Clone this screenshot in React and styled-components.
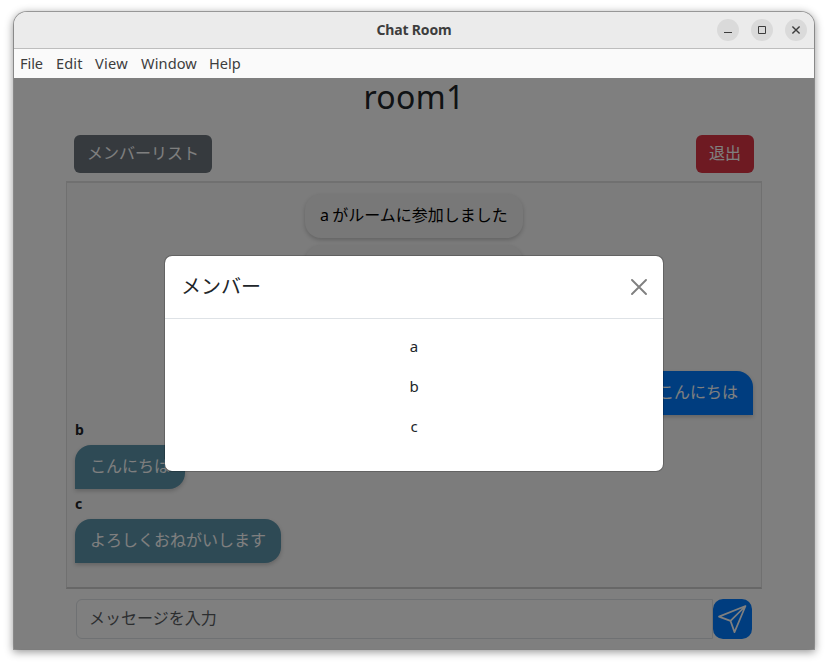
import React from "react";
import styled, { createGlobalStyle } from "styled-components";

const GlobalStyle = createGlobalStyle`
  * { box-sizing: border-box; }
  body { margin: 0; background: #fff; }
  button, input { font: inherit; }
`;

const latin = `"Noto Sans", "Noto Sans CJK JP", sans-serif`;

const Desktop = styled.div`
  width: 828px;
  height: 666px;
  padding: 12px 14px 16px;
  overflow: hidden;
  font-family: ${latin};
  font-size: 16px;
  line-height: 24px;
  color: #212529;
`;

const Window = styled.div`
  display: flex;
  flex-direction: column;
  height: 637px;
  border-radius: 13px 13px 0 0;
  box-shadow: 0 0 0 1px rgba(0, 0, 0, 0.3), 0 2px 8px 1px rgba(0, 0, 0, 0.42);
`;

const TitleBar = styled.header`
  display: grid;
  grid-template-columns: 1fr auto 1fr;
  align-items: center;
  height: 37px;
  padding-right: 7px;
  border-bottom: 1px solid #bdbdbd;
  border-radius: 13px 13px 0 0;
  background: #ebebeb;
`;

const Title = styled.h1`
  grid-column: 2;
  margin: 0 -7px 0 0;
  font-size: 14px;
  font-weight: 700;
  line-height: 20px;
  letter-spacing: -0.18px;
  color: #3d3d3d;
`;

const WindowControls = styled.div`
  display: flex;
  justify-content: flex-end;
  gap: 12px;
`;

const ControlButton = styled.button`
  display: flex;
  width: 22px;
  height: 22px;
  padding: 0;
  border: 0;
  border-radius: 50%;
  background: #dadada;
`;

const MenuBar = styled.nav`
  display: flex;
  gap: 12px;
  height: 29px;
  padding-left: 6px;
  background: #fafafa;
`;

const MenuItem = styled.span`
  width: ${(p) => p.$width}px;
  font-size: 14.6px;
  line-height: 29px;
  letter-spacing: ${(p) => p.$spacing || 0}px;
  white-space: nowrap;
  color: #3d3d3d;
`;

const Page = styled.main`
  position: relative;
  height: 571px;
  background: #fff;
`;

const Container = styled.div`
  width: 696px;
  margin: 0 auto;
`;

const RoomName = styled.h2`
  height: 38px;
  margin: 0 0 19px;
  text-align: center;
  font-size: 32px;
  font-weight: 400;
  line-height: 38px;
  letter-spacing: 0.3px;
`;

const Toolbar = styled.div`
  display: flex;
  justify-content: space-between;
  padding: 0 8px;
  margin-bottom: 8px;
`;

const ActionButton = styled.button`
  height: 38px;
  padding: 0 13px 2px;
  border: 0;
  border-radius: 6px;
  color: #fff;
  line-height: 36px;
  background: ${(p) => (p.$danger ? "#dc3545" : "#6c757d")};
`;

const ChatLog = styled.section`
  display: flex;
  flex-direction: column;
  height: 408px;
  padding: 11px 8px;
  border: 1px solid #e0e0e0;
  border-width: 2px 1px;
  border-bottom-color: #cfcfcf;
  background: #f8f8f8;
`;

const Bubble = styled.div`
  height: 44px;
  padding: 0 15px;
  line-height: 42px;
  white-space: nowrap;
  box-shadow: 0 2px 4px rgba(0, 0, 0, 0.2);
`;

const NoticeBubble = styled(Bubble)`
  align-self: center;
  width: 218px;
  margin-bottom: 7px;
  border-radius: 16px;
  word-spacing: -0.8px;
  color: #000;
  background: #f0f0f0;
`;

const OwnBubble = styled(Bubble)`
  align-self: flex-end;
  margin: 24px 0 6px;
  border-radius: 16px 16px 0 16px;
  color: #fff;
  background: #007bff;
`;

const OtherBubble = styled(Bubble)`
  align-self: flex-start;
  margin-bottom: 6px;
  border-radius: 16px 16px 16px 0;
  color: #fff;
  background: #5c94ab;
`;

const Sender = styled.div`
  height: 24px;
  font-size: 14px;
  font-weight: 700;
  line-height: 18px;
`;

const Composer = styled.form`
  display: flex;
  padding: 10px;
`;

const MessageInput = styled.input`
  width: 637px;
  height: 40px;
  padding: 0 12px 3px;
  border: 1px solid #dee2e6;
  border-radius: 6px 0 0 6px;
  background: #fff;
  &::placeholder { color: #595c5f; opacity: 1; }
`;

const SendButton = styled.button`
  width: 39px;
  height: 40px;
  padding: 0;
  border: 0;
  border-radius: 10px;
  color: #fff;
  background: #007bff;
  svg { display: block; }
`;

const Backdrop = styled.div`
  position: absolute;
  inset: 0;
  display: flex;
  align-items: flex-start;
  justify-content: center;
  padding-top: 177px;
  background: rgba(0, 0, 0, 0.5);
`;

const Dialog = styled.div`
  width: 500px;
  height: 217px;
  border: 1px solid rgba(0, 0, 0, 0.2);
  border-radius: 8px;
  background: #fff;
  background-clip: padding-box;
`;

const DialogHeader = styled.div`
  display: flex;
  align-items: center;
  justify-content: space-between;
  height: 63px;
  padding: 0 16px;
  border-bottom: 1px solid #dee2e6;
`;

const DialogTitle = styled.h3`
  margin: 0;
  font-size: 20px;
  font-weight: 400;
  line-height: 30px;
`;

const CloseButton = styled.button`
  display: flex;
  padding: 0;
  border: 0;
  color: #808080;
  background: none;
`;

const MemberList = styled.ul`
  margin: 0;
  padding: 15px 16px;
  list-style: none;
  text-align: center;
`;

const Member = styled.li`
  height: 24px;
  margin-bottom: 16px;
  font-size: 15px;
`;

const menus = [
  ["File", 24, -0.1],
  ["Edit", 27, 0.1],
  ["View", 34, 0.3],
  ["Window", 56, 0.1],
  ["Help", 32, 0],
];

export default function App() {
  return (
    <Desktop>
      <GlobalStyle />
      <Window>
        <TitleBar>
          <Title>Chat Room</Title>
          <WindowControls>
            <ControlButton aria-label="Minimize">
              <svg width="22" height="22"><path d="M7 13.5h8" stroke="#3d3d3d" /></svg>
            </ControlButton>
            <ControlButton aria-label="Maximize">
              <svg width="22" height="22"><path d="M7.5 7.5h7v7h-7z" fill="none" stroke="#3d3d3d" /></svg>
            </ControlButton>
            <ControlButton aria-label="Close">
              <svg width="22" height="22"><path d="M7.4 7.4l7.2 7.2M14.6 7.4l-7.2 7.2" stroke="#3d3d3d" strokeWidth="1.4" /></svg>
            </ControlButton>
          </WindowControls>
        </TitleBar>
        <MenuBar>
          {menus.map(([label, width, spacing]) => (
            <MenuItem key={label} $width={width} $spacing={spacing}>{label}</MenuItem>
          ))}
        </MenuBar>
        <Page>
          <Container>
            <RoomName>room1</RoomName>
            <Toolbar>
              <ActionButton>メンバーリスト</ActionButton>
              <ActionButton $danger>退出</ActionButton>
            </Toolbar>
            <ChatLog>
              {["a", "b", "c"].map((name) => (
                <NoticeBubble key={name}>{name} がルームに参加しました</NoticeBubble>
              ))}
              <OwnBubble>こんにちは</OwnBubble>
              <Sender>b</Sender>
              <OtherBubble>こんにちは</OtherBubble>
              <Sender>c</Sender>
              <OtherBubble>よろしくおねがいします</OtherBubble>
            </ChatLog>
            <Composer>
              <MessageInput placeholder="メッセージを入力" />
              <SendButton type="button" aria-label="送信">
                <svg width="39" height="40" fill="none" stroke="currentColor" strokeWidth="1.7" strokeLinejoin="round">
                  <path d="M32.5 7L6 17.6l11.5 4.3 4 11.2zM32.5 7L17.5 21.9" />
                </svg>
              </SendButton>
            </Composer>
          </Container>
          <Backdrop>
            <Dialog role="dialog">
              <DialogHeader>
                <DialogTitle>メンバー</DialogTitle>
                <CloseButton aria-label="Close">
                  <svg width="16" height="16"><path d="M1 1l14 14M15 1L1 15" stroke="currentColor" strokeWidth="1.9" strokeLinecap="round" /></svg>
                </CloseButton>
              </DialogHeader>
              <MemberList>
                {["a", "b", "c"].map((name) => <Member key={name}>{name}</Member>)}
              </MemberList>
            </Dialog>
          </Backdrop>
        </Page>
      </Window>
    </Desktop>
  );
}
